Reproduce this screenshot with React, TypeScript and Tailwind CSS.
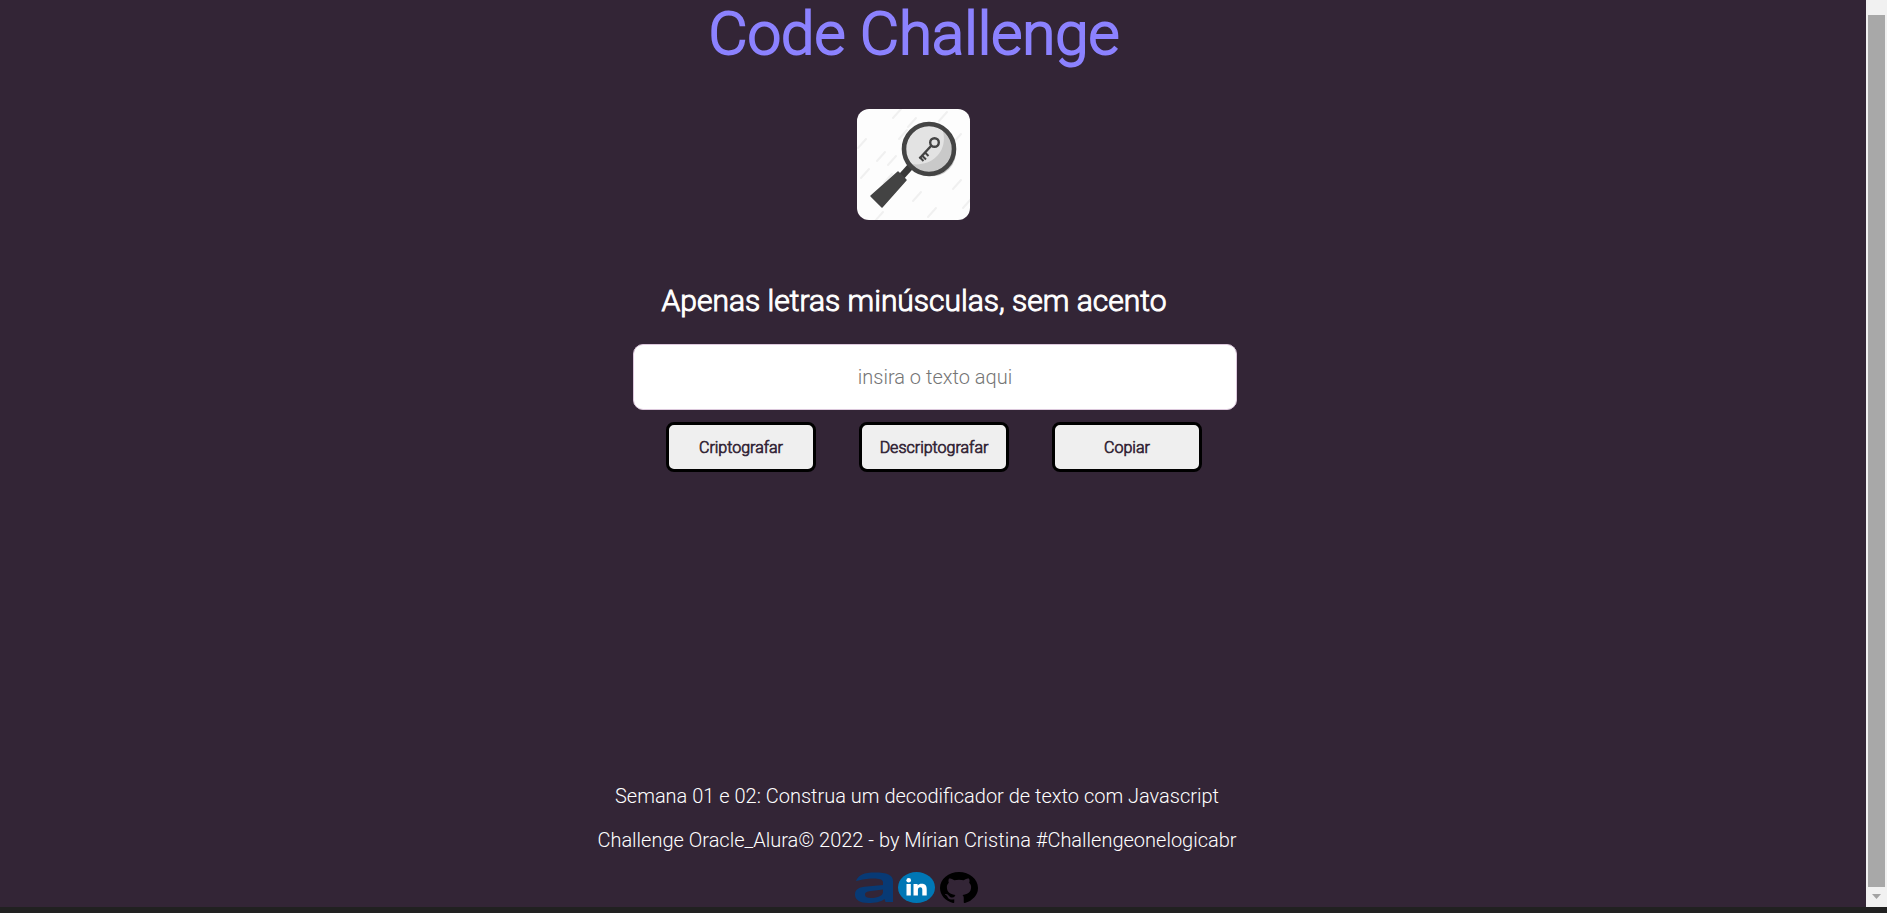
import { useState } from "react";

const watermarks = [
  [5, 35], [24, 48], [31, 70], [55, 14], [86, 8], [100, 30], [40, 5], [60, 88],
  [75, 104], [100, 76], [8, 65], [22, 108], [110, 95], [60, 36], [46, 26], [35, 52],
];

function MagnifierKey() {
  return (
    <svg viewBox="0 0 113 111" className="h-[111px] w-[113px] rounded-xl bg-[#fdfdfd]" role="img" aria-label="Lupa com chave">
      <g stroke="#f0f0f0" strokeWidth="2" strokeLinecap="round">
        {watermarks.map(([x, y]) => (
          <path key={`${x}-${y}`} d={`M${x - 4} ${y + 4}l8 -9`} />
        ))}
      </g>
      <path d="M53 58L44 68" stroke="#383838" strokeWidth="7" />
      <path d="M41 63L49 71L25 98L14 87Z" fill="#434343" stroke="#434343" strokeWidth="1.5" strokeLinejoin="round" />
      <circle cx="72" cy="40" r="24.5" fill="#e3e3e3" />
      <path d="M86 22A24 24 0 1 1 54 55C75 58 91 43 86 22Z" fill="#c9c9c9" />
      <circle cx="72" cy="40" r="25" fill="none" stroke="#444444" strokeWidth="4.6" />
      <g fill="none" stroke="#444444">
        <circle cx="77.5" cy="33.5" r="4.3" strokeWidth="2.4" />
        <path d="M74 37L62.5 49.500" strokeWidth="2.4" />
        <path d="M68 43.5L71.5 47M65 46.5L69 50.5M62.5 48L66.5 52" strokeWidth="2" />
      </g>
    </svg>
  );
}

function AluraLogo() {
  return (
    <svg viewBox="0 0 38 31" className="h-[31px] w-[38px]" aria-hidden="true">
      <path
        fill="#083a75"
        fillRule="evenodd"
        d="M1 9C3 3 9 0.5 20 0.5C32 0.5 38 3 38 9V30H30.500L29.500 27C26 30 20 31 13 31C5 31 0 28 0 22.500C0 17 4 15 12 14.500L28 13V10C28 7.500 24 6.500 18 6.500C12 6.500 8 7.500 1 9ZM28 17.500L16 19C11.500 19.500 10 20.500 10 22.800C10 25 12 26 16 26C23 26 28 23.500 28 20Z"
      />
    </svg>
  );
}

function LinkedinLogo() {
  return (
    <svg viewBox="0 0 37 31" className="h-[31px] w-[37px]" aria-hidden="true">
      <ellipse cx="18.500" cy="15.500" rx="18.500" ry="15.500" fill="#0077b5" />
      <g fill="#fff">
        <circle cx="10.700" cy="8.300" r="2.300" />
        <path d="M8.500 12H12.800V23.500H8.500ZM15.500 12H19.600V13.500C20.500 12.300 21.900 11.700 23.700 11.700C27.500 11.700 28.700 13.800 28.700 17.200V23.500H24.300V18C24.300 16.200 23.800 15.200 22.300 15.200C20.600 15.200 19.900 16.300 19.900 18V23.500H15.500Z" />
      </g>
    </svg>
  );
}

function GithubLogo() {
  return (
    <svg viewBox="0 0 24 23.4" preserveAspectRatio="none" className="h-[31px] w-[38px]" aria-hidden="true">
      <path
        fill="#000"
        d="M12 0C5.370 0 0 5.370 0 12c0 5.300 3.440 9.800 8.210 11.390.6.110.79-.26.79-.58v-2.240c-3.340.73-4.030-1.410-4.030-1.410-.55-1.390-1.330-1.760-1.330-1.760-1.090-.75.08-.73.08-.73 1.210.08 1.840 1.240 1.840 1.240 1.070 1.830 2.810 1.300 3.490 1 .11-.78.420-1.300.76-1.600-2.660-.31-5.470-1.340-5.470-5.940 0-1.310.47-2.380 1.240-3.220-.12-.3-.54-1.520.12-3.170 0 0 1.010-.32 3.300 1.230A11.500 11.500 0 0 1 12 5.800c1.020 0 2.050.14 3 .41 2.290-1.550 3.300-1.230 3.300-1.230.65 1.650.24 2.870.12 3.170.77.84 1.230 1.910 1.230 3.220 0 4.610-2.800 5.620-5.480 5.920.43.370.82 1.100.82 2.220v3.300c0 .32.190.69.800.58A12 12 0 0 0 24 12c0-6.630-5.370-12-12-12Z"
      />
    </svg>
  );
}

function ActionButton({ label, onClick }: { label: string; onClick: () => void }) {
  return (
    <button
      type="button"
      onClick={onClick}
      className="h-[50px] w-[150px] rounded-lg border-3 border-black bg-[#efefef] pt-0.5 text-base font-light text-[#332536] [-webkit-text-stroke:0.7px_#332536]"
    >
      {label}
    </button>
  );
}

const pairs: [string, string][] = [
  ["e", "enter"],
  ["i", "imes"],
  ["a", "ai"],
  ["o", "ober"],
  ["u", "ufat"],
];

export default function App() {
  const [text, setText] = useState("");
  const encrypt = () =>
    setText(text.replace(/[eiaou]/g, (c) => pairs.find(([k]) => k === c)![1]));
  const decrypt = () => setText(pairs.reduce((t, [k, v]) => t.split(v).join(k), text));

  return (
    <div className="flex min-h-screen flex-col bg-[#212121] font-['Roboto',sans-serif]">
      <div className="flex flex-1">
        <div className="flex min-w-0 flex-1 flex-col items-center bg-[#332536] text-white">
          <header className="flex flex-col items-center pr-[38px]">
            <h1 className="pt-1 text-6xl leading-[60px] font-light text-[#8c82ff] [-webkit-text-stroke:2px_#8c82ff]">
              Code Challenge
            </h1>
            <div className="pt-[45px]">
              <MagnifierKey />
            </div>
          </header>
          <main className="flex flex-col items-center">
            <label
              htmlFor="texto"
              className="mt-[61px] mr-[38px] text-3xl leading-10 font-light [-webkit-text-stroke:1px_#fff]"
            >
              Apenas letras minúsculas, sem acento
            </label>
            <input
              id="texto"
              value={text}
              onChange={(e) => setText(e.target.value)}
              placeholder="insira o texto aqui"
              className="mt-[23px] ml-1 h-[66px] w-[604px] rounded-[10px] border border-[#dcc8dc] bg-white text-center text-xl font-light text-[#332536] placeholder:text-[#757575]"
            />
            <div className="mt-3 ml-0.5 flex gap-[43px]">
              <ActionButton label="Criptografar" onClick={encrypt} />
              <ActionButton label="Descriptografar" onClick={decrypt} />
              <ActionButton label="Copiar" onClick={() => navigator.clipboard?.writeText(text)} />
            </div>
          </main>
          <footer className="mt-auto flex flex-col items-center gap-5 pr-8 pb-1 text-xl leading-6 font-light">
            <p>Semana 01 e 02: Construa um decodificador de texto com Javascript</p>
            <p>Challenge Oracle_Alura© 2022 - by Mírian Cristina #Challengeonelogicabr</p>
            <nav className="flex gap-[5px]">
              <a href="#alura" aria-label="Alura"><AluraLogo /></a>
              <a href="#linkedin" aria-label="LinkedIn"><LinkedinLogo /></a>
              <a href="#github" aria-label="GitHub"><GithubLogo /></a>
            </nav>
          </footer>
        </div>
        <div className="flex w-[21px] flex-col items-center bg-[#f1f1f1] pt-[15px]" aria-hidden="true">
          <div className="w-[17px] flex-1 bg-[#a8a8a8]" />
          <svg viewBox="0 0 21 20" className="h-5 w-[21px]">
            <path d="M6 7H15L10.500 12Z" fill="#a3a3a3" />
          </svg>
        </div>
      </div>
      <div className="h-1.5 bg-[#212121]" />
    </div>
  );
}
